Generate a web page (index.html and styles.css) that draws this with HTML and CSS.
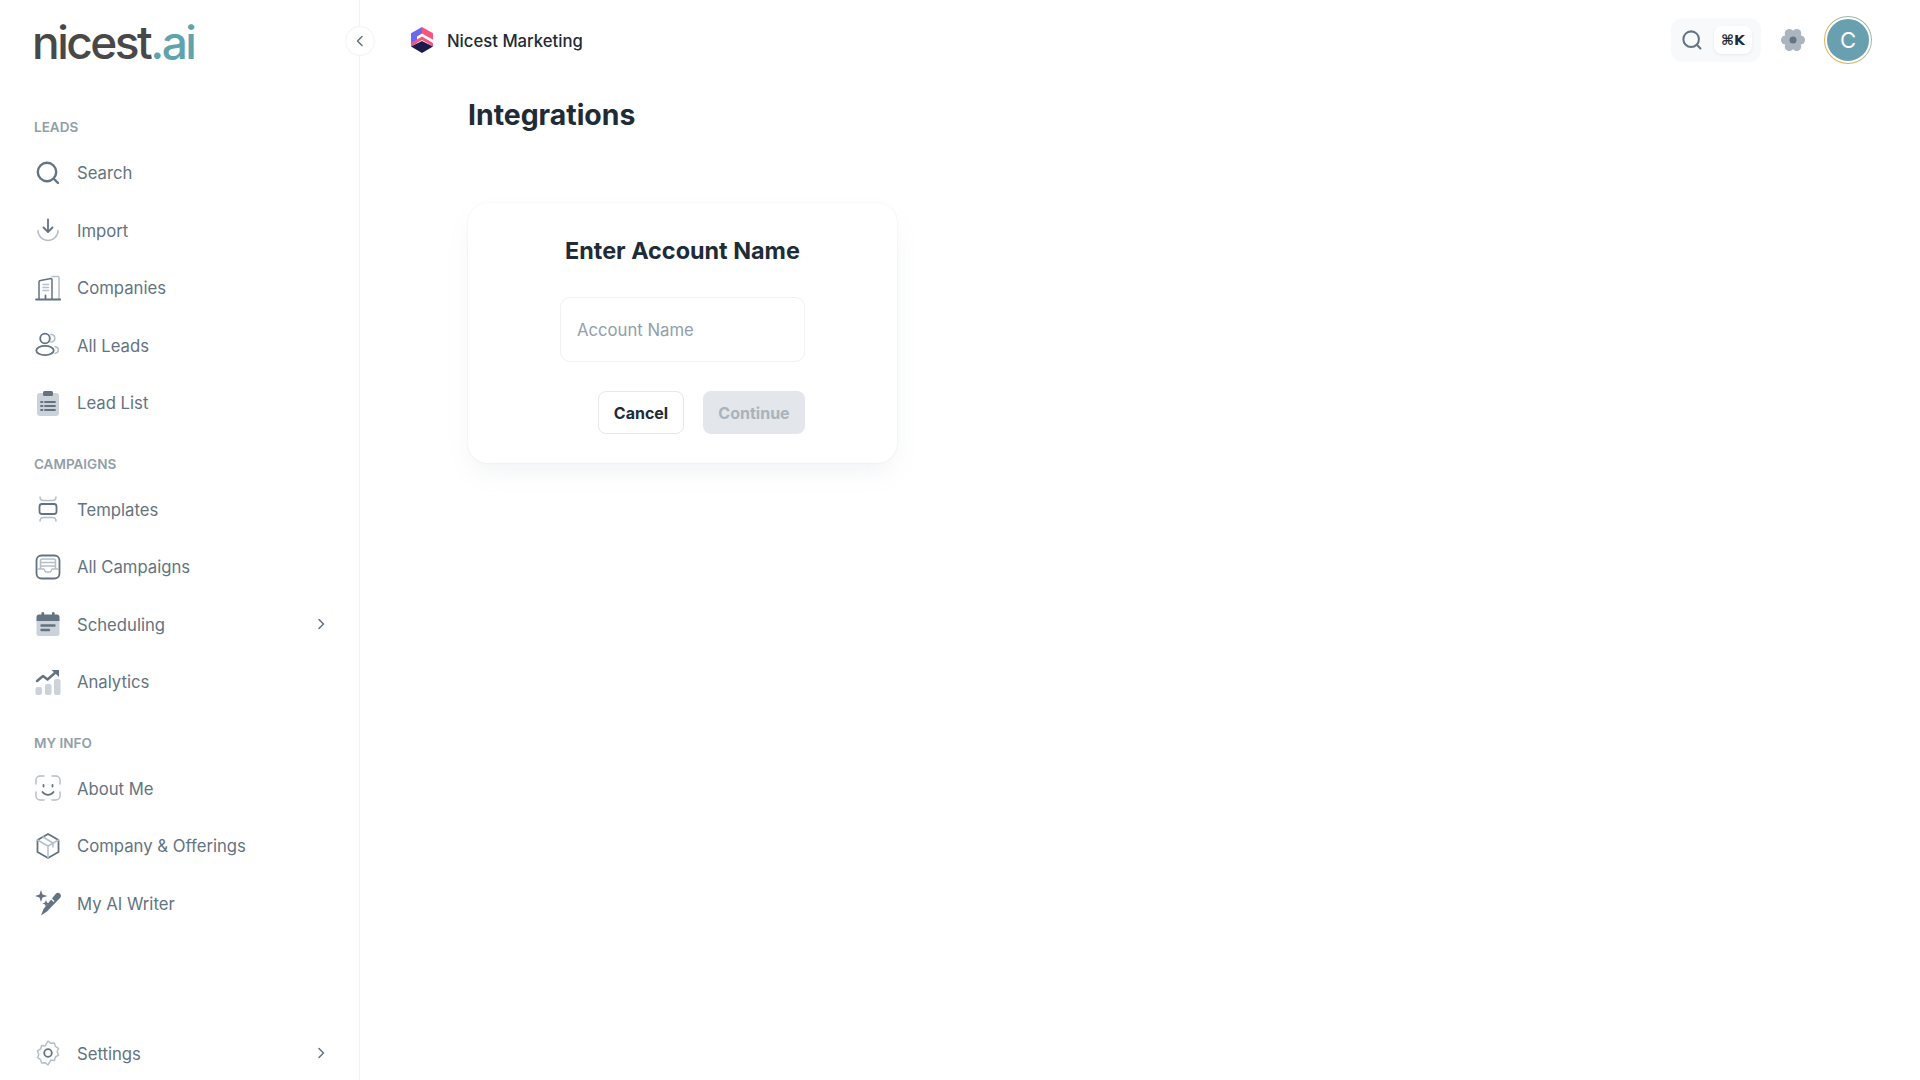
FILE: index.html
```html
<!DOCTYPE html>
<html lang="en">
<head>
    <meta charset="UTF-8">
    <title>Integrations</title>
    <link rel="stylesheet" href="styles.css">
</head>
<body>
    <div class="app">
        <aside class="sidebar">
            <div class="logo">nicest<span class="logo-ai">.ai</span></div>

            <div class="nav-label">Leads</div>
            <a class="nav-item">
                <svg class="icon" viewBox="0 0 26 26"><circle cx="12" cy="12" r="9.2" class="dark wide"/><path d="M19 19l4 4" class="dark wide"/></svg>
                <span>Search</span>
            </a>
            <a class="nav-item">
                <svg class="icon" viewBox="0 0 26 26"><path d="M13 2.500v12M8.500 10.500l4.500 4.500 4.500-4.500" class="dark"/><path d="M3 13.500a10 10 0 0 0 20 0" class="light"/></svg>
                <span>Import</span>
            </a>
            <a class="nav-item">
                <svg class="icon" viewBox="0 0 26 26"><path d="M17 1.500h6a1 1 0 0 1 1 1V24" class="light"/><path d="M4 24V7a1.500 1.500 0 0 1 1.500-1.500L16 3.500a1 1 0 0 1 1 1V24" class="dark thin"/><path d="M1 24.500h24.500M10.500 24.500v-4" class="dark"/><path d="M8 9.500h5.500M8 12.500h5.500M8 15.500h5.500" class="light"/></svg>
                <span>Companies</span>
            </a>
            <a class="nav-item">
                <svg class="icon" viewBox="0 0 26 26"><circle cx="10" cy="6.500" r="4.800" class="dark"/><ellipse cx="10" cy="18.500" rx="8.700" ry="4.700" class="dark"/><path d="M15.500 2.500a3.800 3.800 0 1 1 0 7.500M20 14.500c2 .7 3.500 2 3.500 3.500s-1.500 2.800-3.500 3.500" class="light"/></svg>
                <span>All Leads</span>
            </a>
            <a class="nav-item">
                <svg class="icon" viewBox="0 0 26 26"><rect x="2" y="3" width="22" height="23" rx="3" class="fill-light"/><rect x="8" y="1" width="10" height="5" rx="1.500" class="fill-dark"/><path d="M10 12h10M10 16h10M10 20h10M6 12h1.500M6 16h1.500M6 20h1.500" class="dark"/></svg>
                <span>Lead List</span>
            </a>

            <div class="nav-label nav-label-gap">Campaigns</div>
            <a class="nav-item">
                <svg class="icon" viewBox="0 0 26 26"><rect x="4.500" y="8" width="17" height="10" rx="2.500" class="dark"/><path d="M5 1c0 2.500 1.500 3.500 3.500 3.500h9c2 0 3.500-1 3.500-3.500M5 25c0-2.500 1.500-3.500 3.500-3.500h9c2 0 3.500 1 3.500 3.500" class="light"/></svg>
                <span>Templates</span>
            </a>
            <a class="nav-item">
                <svg class="icon" viewBox="0 0 26 26"><rect x="1.500" y="1.500" width="23" height="23" rx="5" class="dark"/><path d="M5.500 15V7a2 2 0 0 1 2-2h11a2 2 0 0 1 2 2v8M5.500 8.500h15M5.500 12h15M3 15h6l1.500 3h5l1.500-3h6" class="light"/></svg>
                <span>All Campaigns</span>
            </a>
            <a class="nav-item">
                <svg class="icon" viewBox="0 0 26 26"><rect x="1.500" y="7" width="23" height="18" rx="2.500" class="fill-light"/><path d="M1.500 10V6a2.500 2.500 0 0 1 2.500-2.500h18a2.500 2.500 0 0 1 2.500 2.500v4z" class="fill-dark"/><rect x="6.500" y="1" width="2.600" height="5" rx="1.300" class="fill-dark"/><rect x="17" y="1" width="2.600" height="5" rx="1.300" class="fill-dark"/><path d="M6.500 14.500h13M6.500 19h7.500" class="dark wide"/></svg>
                <span>Scheduling</span>
                <svg class="chevron" viewBox="0 0 12 12"><path d="M4 1.500L8.500 6 4 10.500"/></svg>
            </a>
            <a class="nav-item">
                <svg class="icon" viewBox="0 0 26 26"><rect x="0.500" y="18" width="6.500" height="8" rx="2" class="fill-light"/><rect x="10" y="15" width="6.500" height="11" rx="2" class="fill-light"/><rect x="19" y="10" width="6.500" height="16" rx="2" class="fill-light"/><path d="M2 12l6-5 4.500 3.500L21 3" class="dark wide"/><path d="M16.500 1H24v7z" class="fill-dark"/></svg>
                <span>Analytics</span>
            </a>

            <div class="nav-label nav-label-gap">My Info</div>
            <a class="nav-item">
                <svg class="icon" viewBox="0 0 26 26"><path d="M1 9V5a4 4 0 0 1 4-4h4M17 1h4a4 4 0 0 1 4 4v4M25 17v4a4 4 0 0 1-4 4h-4M9 25H5a4 4 0 0 1-4-4v-4" class="light"/><path d="M8.500 10v1.500M17.500 10v1.500M7.500 17c1.500 2 3.500 2.800 5.500 2.800s4-.8 5.500-2.800" class="dark"/></svg>
                <span>About Me</span>
            </a>
            <a class="nav-item">
                <svg class="icon" viewBox="0 0 26 26"><path d="M13 1l10.500 6v12L13 25 2.500 19V7z" class="dark"/><path d="M2.500 7L13 13l10.500-6M13 13v12M8 4l10 6v4" class="light"/></svg>
                <span>Company &amp; Offerings</span>
            </a>
            <a class="nav-item">
                <svg class="icon" viewBox="0 0 26 26"><path d="M6 0l1.500 4.500L12.500 6 7.500 7.500 6 12 4.500 7.500 0 6l4.500-1.500z" class="fill-dark"/><path d="M11 10l1 2.500 2.500 1-2.500 1-1 2.500-1-2.500L7.500 13.500l2.500-1z" class="fill-dark"/><path d="M21 3.500a3 3 0 0 1 4.200 4.200L12 21.500l-6 4 2.500-6.500z" class="fill-dark"/><path d="M16 8.500l3 3" class="white"/></svg>
                <span>My AI Writer</span>
            </a>

            <a class="nav-item nav-item-foot">
                <svg class="icon" viewBox="0 0 26 26"><path d="M13 1l2.800 2.300 3.600-.4 1 3.500 3.100 1.900-1.300 3.400 1.300 3.400-3.100 1.900-1 3.500-3.600-.4L13 25l-2.800-2.300-3.600.4-1-3.500-3.100-1.900 1.300-3.400-1.300-3.400 3.100-1.900 1-3.500 3.600.4z" class="light"/><circle cx="13" cy="13" r="3.800" class="dark"/></svg>
                <span>Settings</span>
                <svg class="chevron" viewBox="0 0 12 12"><path d="M4 1.500L8.500 6 4 10.500"/></svg>
            </a>

            <button class="collapse">
                <svg viewBox="0 0 12 12"><path d="M8 1.500L3.500 6 8 10.500"/></svg>
            </button>
        </aside>

        <div class="main">
            <header class="topbar">
                <div class="workspace">
                    <svg class="workspace-logo" viewBox="0 0 24 26">
                        <path d="M12 0l11 6.300v6.500L12 6.500z" fill="#f7557f"/>
                        <path d="M12 0L1 6.300v13L7 16V9.500l5-3z" fill="#6d68f0"/>
                        <path d="M12 9.500l11 6.500v3.500L12 13 1 19.500V16z" fill="#f7557f"/>
                        <path d="M12 14l11 5.600L12 26 1 19.600z" fill="#1b1a4b"/>
                    </svg>
                    <span class="workspace-name">Nicest Marketing</span>
                </div>
                <div class="top-actions">
                    <div class="search-pill">
                        <svg class="search-icon" viewBox="0 0 26 26"><circle cx="12" cy="12" r="9.200" class="dark wide"/><path d="M19 19l4 4" class="dark wide"/></svg>
                        <span class="kbd">⌘K</span>
                    </div>
                    <svg class="gear" viewBox="0 0 26 26">
                        <g fill="#aab5bf">
                            <circle cx="13" cy="13" r="8"/>
                            <circle cx="20.500" cy="13" r="4.500"/>
                            <circle cx="16.750" cy="6.500" r="4.500"/>
                            <circle cx="9.250" cy="6.500" r="4.500"/>
                            <circle cx="5.500" cy="13" r="4.500"/>
                            <circle cx="9.250" cy="19.500" r="4.500"/>
                            <circle cx="16.750" cy="19.500" r="4.500"/>
                        </g>
                        <circle cx="13" cy="13" r="3.500" fill="#637381"/>
                    </svg>
                    <div class="avatar-ring"><div class="avatar">C</div></div>
                </div>
            </header>

            <div class="content">
                <h1 class="page-title">Integrations</h1>
                <div class="card">
                    <h2 class="card-title">Enter Account Name</h2>
                    <input class="account-input" type="text" placeholder="Account Name">
                    <div class="card-actions">
                        <button class="btn btn-cancel">Cancel</button>
                        <button class="btn btn-continue">Continue</button>
                    </div>
                </div>
            </div>
        </div>
    </div>
</body>
</html>
```

FILE: styles.css
```css
* {
    box-sizing: border-box;
}
html, body {
    margin: 0;
    height: 100%;
    overflow: hidden;
}
body {
    font-family: Inter, "Liberation Sans", sans-serif;
    background: #fff;
    color: #212b36;
}
.app {
    display: flex;
    height: 1080px;
}

/* sidebar */
.sidebar {
    position: relative;
    display: flex;
    flex-direction: column;
    flex: 0 0 360px;
    height: 1080px;
    padding: 0 32px 0 35px;
    border-right: 1px solid #f1f3f5;
}
.logo {
    height: 117px;
    margin-left: -3px;
    padding-top: 13px;
    font-size: 46px;
    font-weight: 500;
    line-height: 58px;
    letter-spacing: -2.5px;
    color: #484848;
}
.logo-ai {
    color: #5fa3ad;
}
.nav-label {
    height: 20px;
    margin-bottom: 7px;
    margin-left: -1px;
    font-size: 13.500px;
    font-weight: 600;
    line-height: 20px;
    text-transform: uppercase;
    color: #919eab;
}
.nav-label-gap {
    margin-top: 22px;
}
.nav-item {
    display: flex;
    align-items: center;
    height: 57.5px;
    font-size: 16.7px;
    color: #637381;
}
.nav-item span {
    padding-top: 1px;
}
.nav-item-foot {
    height: 54px;
    margin-top: auto;
}
.icon {
    flex: 0 0 26px;
    width: 26px;
    height: 26px;
    margin-right: 16px;
    fill: none;
}
.chevron {
    width: 12px;
    height: 12px;
    margin-left: auto;
    fill: none;
    stroke: #637381;
    stroke-width: 1.5;
    stroke-linecap: round;
    stroke-linejoin: round;
}
.dark {
    fill: none;
    stroke: #637381;
    stroke-width: 1.8;
    stroke-linecap: round;
    stroke-linejoin: round;
}
.thin {
    stroke-width: 1.500;
}
.wide {
    stroke-width: 2.400;
}
.light {
    fill: none;
    stroke: #b5bfc9;
    stroke-width: 1.500;
    stroke-linecap: round;
    stroke-linejoin: round;
}
.white {
    fill: none;
    stroke: #fff;
    stroke-width: 1.200;
}
.fill-dark {
    fill: #637381;
}
.fill-light {
    fill: #b5bfc9;
    opacity: 0.7;
}
.collapse {
    position: absolute;
    top: 26px;
    right: -16px;
    display: flex;
    align-items: center;
    justify-content: center;
    width: 30px;
    height: 30px;
    padding: 0;
    border: 1px solid #f1f3f5;
    border-radius: 50%;
    background: #fff;
}
.collapse svg {
    width: 12px;
    height: 12px;
    fill: none;
    stroke: #637381;
    stroke-width: 1.500;
    stroke-linecap: round;
    stroke-linejoin: round;
}

/* main */
.main {
    flex: 1;
    display: flex;
    flex-direction: column;
}
.topbar {
    display: flex;
    align-items: center;
    justify-content: space-between;
    height: 80px;
    padding: 0 48px 0 50px;
}
.workspace {
    display: flex;
    align-items: center;
    gap: 13px;
}
.workspace-logo {
    width: 24px;
    height: 26px;
}
.workspace-name {
    padding-top: 1px;
    font-size: 16.7px;
    font-weight: 500;
}
.top-actions {
    display: flex;
    align-items: center;
}
.search-pill {
    display: flex;
    align-items: center;
    justify-content: space-between;
    width: 90px;
    height: 44px;
    padding: 0 9px 0 10px;
    border-radius: 12px;
    background: #f8f9fa;
}
.search-icon {
    width: 22px;
    height: 22px;
}
.kbd {
    display: flex;
    align-items: center;
    justify-content: center;
    width: 38px;
    height: 28px;
    border-radius: 8px;
    background: #fff;
    box-shadow: 0 1px 3px rgba(145, 158, 171, 0.16);
    font-family: "DejaVu Sans", sans-serif;
    font-size: 14px;
    font-weight: 700;
    color: #212b36;
}
.gear {
    width: 26px;
    height: 26px;
    margin: 0 18px 0 19px;
}
.avatar-ring {
    display: flex;
    align-items: center;
    justify-content: center;
    width: 48px;
    height: 48px;
    border-radius: 50%;
    background: linear-gradient(45deg, #f2ab35 0%, #d9b465 35%, #9dbcaf 65%, #8db3bb 100%);
}
.avatar {
    display: flex;
    align-items: center;
    justify-content: center;
    width: 46px;
    height: 46px;
    border: 2px solid #fff;
    border-radius: 50%;
    background: #69a0b0;
    font-size: 22px;
    color: #fff;
}
.content {
    padding: 12px 0 0 108px;
}
.page-title {
    margin: 0;
    font-size: 28.400px;
    font-weight: 700;
    line-height: 46px;
}
.card {
    display: flex;
    flex-direction: column;
    align-items: center;
    width: 429px;
    height: 260px;
    margin-top: 65px;
    padding-top: 32px;
    border-radius: 20px;
    background: #fff;
    box-shadow: 0 0 2px rgba(145, 158, 171, 0.2), 0 12px 24px -4px rgba(145, 158, 171, 0.12);
}
.card-title {
    margin: 0;
    font-size: 23.400px;
    font-weight: 700;
    line-height: 32px;
}
.account-input {
    width: 245px;
    height: 65px;
    margin-top: 30px;
    padding: 0 16px;
    border: 1px solid #eff1f3;
    border-radius: 10px;
    font-family: inherit;
    font-size: 16.7px;
    color: #212b36;
    outline: none;
}
.account-input::placeholder {
    color: #919eab;
}
.card-actions {
    display: flex;
    justify-content: flex-end;
    gap: 19px;
    width: 245px;
    margin-top: 29px;
}
.btn {
    height: 43px;
    padding: 0;
    border-radius: 8px;
    font-family: inherit;
    font-size: 16px;
    font-weight: 700;
}
.btn-cancel {
    width: 86px;
    border: 1px solid #e6e9ec;
    background: #fff;
    color: #212b36;
}
.btn-continue {
    width: 102px;
    border: none;
    background: #e3e6ea;
    color: #a8b3bd;
}
```
